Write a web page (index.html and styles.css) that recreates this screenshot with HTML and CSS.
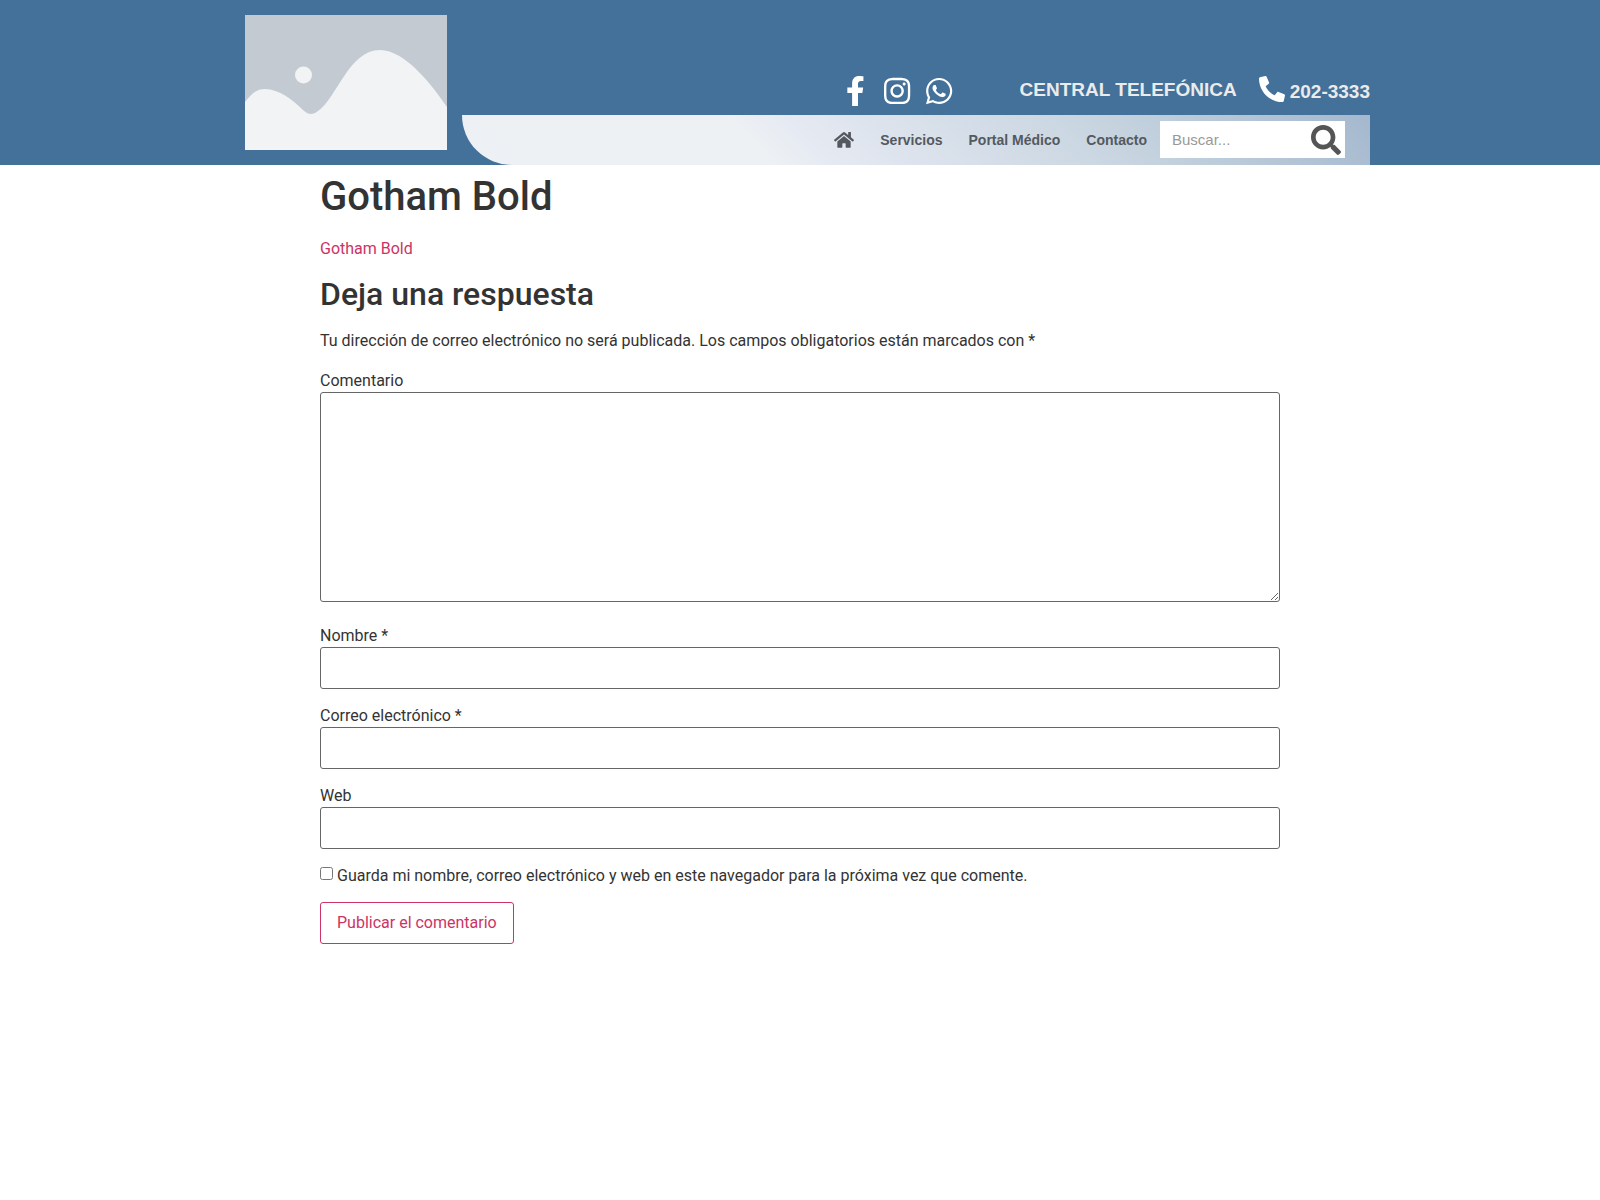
FILE: index.html
```
<!DOCTYPE html>
<html lang="es">
<head>
    <meta charset="UTF-8">
    <meta name="viewport" content="width=device-width, initial-scale=1.0">
    <title>Gotham Bold</title>
    <link rel="stylesheet" href="styles.css">
</head>
<body>

<header class="site-header">
    <div class="header-inner">
        <a class="logo" href="#" aria-label="Inicio">
            <svg viewBox="0 0 202 135">
                <rect width="202" height="135" fill="#c3cad2"/>
                <path d="M0 87C7 78 12 74 20 74C34 74 48 85 58 95C62 99 67 101 73 96C92 83 104 35 135 35C160 35 187 70 202 92V135H0Z" fill="#f1f3f5"/>
                <circle cx="58.500" cy="60" r="8.500" fill="#f1f3f5"/>
            </svg>
        </a>
        <div class="header-main">
            <div class="topbar">
                <div class="social">
                    <a href="#" aria-label="Facebook">
                        <svg viewBox="0 0 320 512"><path d="M279.140 288l14.220-92.660h-88.910v-60.130c0-25.350 12.420-50.060 52.240-50.060h40.420V6.260S260.430 0 225.360 0c-73.220 0-121.080 44.380-121.080 124.720v70.620H22.890V288h81.390v224h100.170V288z"/></svg>
                    </a>
                    <a href="#" aria-label="Instagram">
                        <svg viewBox="0 0 448 512"><path d="M224.100 141c-63.600 0-114.900 51.300-114.900 114.900s51.300 114.900 114.900 114.900S339 319.500 339 255.900 287.700 141 224.100 141zm0 189.600c-41.100 0-74.700-33.500-74.700-74.700s33.500-74.700 74.700-74.700 74.700 33.500 74.700 74.700-33.600 74.700-74.700 74.700zm146.400-194.300c0 14.900-12 26.800-26.800 26.800-14.900 0-26.800-12-26.800-26.800s12-26.800 26.800-26.800 26.800 12 26.800 26.800zm76.100 27.200c-1.700-35.900-9.900-67.700-36.200-93.900-26.200-26.200-58-34.400-93.900-36.200-37-2.100-147.900-2.100-184.900 0-35.800 1.700-67.600 9.900-93.900 36.100s-34.400 58-36.200 93.900c-2.100 37-2.100 147.900 0 184.900 1.700 35.900 9.900 67.700 36.200 93.900s58 34.400 93.900 36.200c37 2.100 147.900 2.100 184.900 0 35.900-1.700 67.700-9.900 93.900-36.200 26.200-26.200 34.400-58 36.200-93.900 2.100-37 2.100-147.800 0-184.800zM398.800 388c-7.800 19.600-22.900 34.700-42.600 42.600-29.500 11.700-99.500 9-132.100 9s-102.700 2.600-132.100-9c-19.600-7.800-34.700-22.900-42.600-42.600-11.700-29.500-9-99.500-9-132.100s-2.600-102.700 9-132.100c7.800-19.600 22.900-34.700 42.600-42.600 29.500-11.700 99.500-9 132.100-9s102.700-2.600 132.100 9c19.600 7.800 34.700 22.900 42.600 42.600 11.700 29.500 9 99.500 9 132.100s2.700 102.700-9 132.100z"/></svg>
                    </a>
                    <a href="#" aria-label="WhatsApp">
                        <svg viewBox="0 0 448 512"><path d="M380.900 97.100C339 55.100 283.200 32 223.900 32c-122.400 0-222 99.600-222 222 0 39.100 10.200 77.300 29.600 111L0 480l117.700-30.900c32.400 17.700 68.900 27 106.100 27h.1c122.300 0 224.100-99.600 224.100-222 0-59.300-25.200-115-67.100-157zm-157 341.600c-33.200 0-65.700-8.900-94-25.700l-6.700-4-69.800 18.300L72 359.200l-4.400-7c-18.500-29.400-28.200-63.300-28.200-98.200 0-101.700 82.800-184.500 184.600-184.500 49.300 0 95.600 19.200 130.400 54.100 34.800 34.900 56.200 81.200 56.100 130.500 0 101.800-84.900 184.600-186.600 184.600zm101.200-138.200c-5.500-2.800-32.800-16.200-37.900-18-5.100-1.900-8.800-2.800-12.500 2.800-3.700 5.600-14.300 18-17.600 21.800-3.200 3.700-6.500 4.200-12 1.400-32.600-16.300-54-29.100-75.500-66-5.700-9.800 5.700-9.100 16.300-30.300 1.800-3.700.9-6.900-.5-9.700-1.400-2.800-12.500-30.100-17.100-41.200-4.500-10.800-9.100-9.300-12.500-9.500-3.200-.2-6.900-.2-10.600-.2-3.700 0-9.700 1.400-14.800 6.900-5.100 5.600-19.400 19-19.400 46.300 0 27.300 19.900 53.700 22.600 57.400 2.800 3.700 39.100 59.700 94.800 83.800 35.200 15.200 49 16.500 66.600 13.900 10.700-1.600 32.800-13.400 37.400-26.400 4.600-13 4.600-24.100 3.200-26.400-1.300-2.500-5-3.900-10.500-6.600z"/></svg>
                    </a>
                </div>
                <h2 class="central">CENTRAL TELEFÓNICA</h2>
                <a class="phone" href="tel:2023333">
                    <svg viewBox="0 0 512 512"><path d="M493.400 24.600l-104-24c-11.300-2.600-22.900 3.300-27.500 13.900l-48 112c-4.200 9.800-1.400 21.300 6.900 28l60.600 49.600c-36 76.700-98.900 140.500-177.200 177.200l-49.600-60.600c-6.800-8.300-18.200-11.100-28-6.900l-112 48C3.900 366.500-2 378.100.6 389.400l24 104C27.100 504.200 36.700 512 48 512c256.100 0 464-207.500 464-464 0-11.200-7.700-20.900-18.600-23.400z" transform="matrix(-1 0 0 1 512 0)"/></svg>
                    <span>202-3333</span>
                </a>
            </div>
            <div class="menubar">
                <nav class="menu">
                    <a href="#" aria-label="Inicio">
                        <svg viewBox="0 0 576 512"><path d="M280.370 148.260L96 300.110V464a16 16 0 0 0 16 16l112.060-.29a16 16 0 0 0 15.920-16V368a16 16 0 0 1 16-16h64a16 16 0 0 1 16 16v95.640a16 16 0 0 0 16 16.050L464 480a16 16 0 0 0 16-16V300L295.670 148.260a12.190 12.190 0 0 0-15.300 0zM571.600 251.470L488 182.560V44.050a12 12 0 0 0-12-12h-56a12 12 0 0 0-12 12v72.610L318.470 43a48 48 0 0 0-61 0L4.340 251.470a12 12 0 0 0-1.600 16.900l25.500 31A12 12 0 0 0 45.150 301l235.220-193.740a12.190 12.190 0 0 1 15.300 0L530.900 301a12 12 0 0 0 16.900-1.600l25.500-31a12 12 0 0 0-1.700-16.930z"/></svg>
                    </a>
                    <a href="#">Servicios</a>
                    <a href="#">Portal Médico</a>
                    <a href="#">Contacto</a>
                </nav>
                <form class="search" role="search">
                    <input type="search" placeholder="Buscar..." aria-label="Buscar">
                    <button type="submit" aria-label="Buscar">
                        <svg viewBox="0 0 512 512"><path d="M505 442.700L405.300 343c-4.500-4.500-10.600-7-17-7H372c27.600-35.300 44-79.700 44-128C416 93.100 322.900 0 208 0S0 93.100 0 208s93.100 208 208 208c48.300 0 92.700-16.400 128-44v16.300c0 6.400 2.500 12.500 7 17l99.700 99.700c9.400 9.400 24.600 9.400 33.900 0l28.300-28.300c9.400-9.400 9.400-24.600.1-34zM208 336c-70.700 0-128-57.200-128-128 0-70.700 57.200-128 128-128 70.700 0 128 57.200 128 128 0 70.700-57.200 128-128 128z"/></svg>
                    </button>
                </form>
            </div>
        </div>
    </div>
</header>

<main class="site-main">
    <h1>Gotham Bold</h1>
    <p class="attachment"><a href="#">Gotham Bold</a></p>

    <section class="comments">
        <h2>Deja una respuesta</h2>
        <form class="comment-form">
            <p class="notes">Tu dirección de correo electrónico no será publicada. Los campos obligatorios están marcados con *</p>
            <div class="field field-comment">
                <label for="comment">Comentario</label>
                <textarea id="comment" name="comment"></textarea>
            </div>
            <div class="field">
                <label for="author">Nombre *</label>
                <input type="text" id="author" name="author">
            </div>
            <div class="field">
                <label for="email">Correo electrónico *</label>
                <input type="email" id="email" name="email">
            </div>
            <div class="field">
                <label for="url">Web</label>
                <input type="url" id="url" name="url">
            </div>
            <div class="consent">
                <input type="checkbox" id="consent" name="consent">
                <label for="consent">Guarda mi nombre, correo electrónico y web en este navegador para la próxima vez que comente.</label>
            </div>
            <button class="submit" type="submit">Publicar el comentario</button>
        </form>
    </section>
</main>

</body>
</html>
```
FILE: styles.css
```
* {
    box-sizing: border-box;
}
body {
    margin: 0;
    font-family: Roboto, sans-serif;
    font-size: 16px;
    line-height: 24px;
    color: #333;
    background-color: #fff;
}
a {
    color: #c36;
    text-decoration: none;
}
svg {
    display: block;
    fill: currentColor;
}

/* Header */
.site-header {
    background-color: #447199;
    font-family: "Liberation Sans", Arial, sans-serif;
}
.header-inner {
    display: flex;
    max-width: 1140px;
    margin: 0 auto;
}
.logo {
    flex: none;
    padding: 15px;
}
.logo svg {
    width: 202px;
}
.header-main {
    flex: 1;
    display: flex;
    flex-direction: column;
    justify-content: flex-end;
}
.topbar {
    display: flex;
    justify-content: flex-end;
    align-items: flex-start;
    color: #ebebeb;
    font-size: 19px;
    font-weight: bold;
    line-height: 28px;
    padding-bottom: 9px;
}
.social {
    display: flex;
    gap: 12px;
    margin-right: 65px;
}
.social a {
    width: 30px;
    color: #fff;
}
.social svg {
    height: 30px;
    margin: 0 auto;
}
.central {
    margin: 0 22px 0 0;
    font-size: 19px;
}
.phone {
    display: flex;
    gap: 5px;
    color: #ebebeb;
}
.phone svg {
    width: 26px;
    height: 26px;
    color: #fff;
}
.phone span {
    padding-top: 2px;
}
.menubar {
    display: flex;
    justify-content: flex-end;
    align-items: center;
    height: 50px;
    padding-right: 25px;
    border-bottom-left-radius: 50px;
    background-image: linear-gradient(45deg, #edf1f5 0%, #edf1f4 33%, #e5e9f2 39%, #c8d5e0 70%, #a4b8ce 100%);
}
.menu {
    display: flex;
    align-items: center;
}
.menu a {
    padding: 0 13px;
    color: #54595f;
    font-size: 14px;
    font-weight: bold;
}
.menu svg {
    width: 20px;
}
.search {
    display: flex;
    align-items: center;
    width: 185px;
    height: 37px;
    margin-bottom: 1px;
    background-color: #fff;
}
.search input {
    flex: 1;
    min-width: 0;
    padding: 0 0 0 12px;
    border: none;
    background: none;
    font-family: inherit;
    font-size: 15px;
}
.search input::placeholder {
    color: #999;
}
.search button {
    padding: 0 4px 0 0;
    border: none;
    background: none;
    color: #555;
    cursor: pointer;
}
.search button svg {
    width: 30px;
}

/* Content */
.site-main {
    max-width: 960px;
    margin: 0 auto;
}
h1 {
    margin: 8px 0 16px;
    font-size: 40px;
    font-weight: 500;
    line-height: 48px;
}
.attachment {
    margin: 0 0 14px;
}
.comments h2 {
    margin: 0 0 16px;
    font-size: 32px;
    font-weight: 500;
    line-height: 38px;
}
.notes {
    margin: 0 0 16px;
}
.field {
    margin-bottom: 15px;
}
.field-comment {
    margin-bottom: 22px;
}
.field label {
    display: block;
    line-height: 23px;
}
.field input,
.field textarea {
    display: block;
    width: 100%;
    padding: 8px 16px;
    border: 1px solid #666;
    border-radius: 3px;
    font-family: inherit;
    font-size: 16px;
}
.field input {
    height: 42px;
}
.field textarea {
    height: 210px;
    resize: vertical;
}
.consent {
    display: flex;
    align-items: flex-start;
    gap: 4px;
    margin-bottom: 14px;
}
.consent input {
    width: 13px;
    height: 13px;
    margin: 3px 0 0;
}
.submit {
    padding: 8px 16px;
    border: 1px solid #c36;
    border-radius: 3px;
    background-color: transparent;
    color: #c36;
    font-family: inherit;
    font-size: 16px;
    line-height: 24px;
    cursor: pointer;
}
```
